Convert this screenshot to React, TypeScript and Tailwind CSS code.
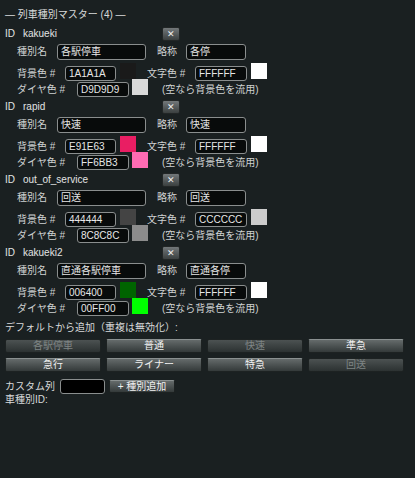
import React from "react";

type TrainType = {
  id: string;
  name: string;
  short: string;
  bg: string;
  fg: string;
  diya: string;
};

const types: TrainType[] = [
  { id: "kakueki", name: "各駅停車", short: "各停", bg: "1A1A1A", fg: "FFFFFF", diya: "D9D9D9" },
  { id: "rapid", name: "快速", short: "快速", bg: "E91E63", fg: "FFFFFF", diya: "FF6BB3" },
  { id: "out_of_service", name: "回送", short: "回送", bg: "444444", fg: "CCCCCC", diya: "8C8C8C" },
  { id: "kakueki2", name: "直通各駅停車", short: "直通各停", bg: "006400", fg: "FFFFFF", diya: "00FF00" },
];

const defaults = [
  { label: "各駅停車", disabled: true },
  { label: "普通", disabled: false },
  { label: "快速", disabled: true },
  { label: "準急", disabled: false },
  { label: "急行", disabled: false },
  { label: "ライナー", disabled: false },
  { label: "特急", disabled: false },
  { label: "回送", disabled: true },
];

function Field({ value, w, h = "h-[15px]" }: { value: string; w: string; h?: string }) {
  return (
    <div
      className={`${w} ${h} flex items-center rounded-[3px] border border-[#8a8e8e] bg-[#080b0b] px-[3px] text-[10px] leading-none text-[#e6e6e6]`}
    >
      {value}
    </div>
  );
}

function Swatch({ hex }: { hex: string }) {
  return <div className="h-[16px] w-[16px] shrink-0" style={{ backgroundColor: `#${hex}` }} />;
}

function TypeBlock({ t }: { t: TrainType }) {
  return (
    <div className="flex flex-col">
      {/* id + delete */}
      <div className="flex h-[18px] items-center">
        <span className="w-[18px]">ID</span>
        <span className="w-[139px]">{t.id}</span>
        <button className="flex h-[14px] w-[18px] items-center justify-center rounded-[2px] border border-[#222626] bg-gradient-to-b from-[#73787a] to-[#3b4040] text-[9px] leading-none text-[#f0f0f0]">
          ✕
        </button>
      </div>

      {/* name / short name */}
      <div className="mt-[1px] flex h-[16px] items-center pl-[12px]">
        <span className="w-[40px] text-[#cfd2d2]">種別名</span>
        <Field value={t.name} w="w-[89px]" h="h-[16px]" />
        <span className="ml-[11px] w-[29px] text-[#cfd2d2]">略称</span>
        <Field value={t.short} w="w-[60px]" h="h-[16px]" />
      </div>

      {/* background / text colour */}
      <div className="mt-[3px] flex h-[16px] items-start pl-[12px]">
        <span className="mt-[3px] flex h-[15px] w-[48px] items-center text-[#cfd2d2]">背景色 #</span>
        <div className="mt-[3px]">
          <Field value={t.bg} w="w-[51px]" />
        </div>
        <div className="ml-[4px]">
          <Swatch hex={t.bg} />
        </div>
        <span className="ml-[11px] mt-[3px] flex h-[15px] w-[48px] items-center text-[#cfd2d2]">文字色 #</span>
        <div className="mt-[3px]">
          <Field value={t.fg} w="w-[52px]" />
        </div>
        <div className="ml-[4px]">
          <Swatch hex={t.fg} />
        </div>
      </div>

      {/* diagram colour */}
      <div className="flex h-[16px] items-start pl-[12px]">
        <span className="mt-[3px] flex h-[15px] w-[60px] items-center text-[#cfd2d2]">ダイヤ色 #</span>
        <div className="mt-[3px]">
          <Field value={t.diya} w="w-[52px]" />
        </div>
        <div className="ml-[3px]">
          <Swatch hex={t.diya} />
        </div>
        <span className="ml-[14px] mt-[3px] flex h-[15px] items-center text-[#cfd2d2]">(空なら背景色を流用)</span>
      </div>
    </div>
  );
}

export default function App() {
  return (
    <div
      className="h-[478px] w-full bg-[#1a2021] pl-[5px] pt-[8px] text-[10px] leading-none text-[#e2e4e4]"
      style={{ fontFamily: '"Liberation Sans", "Noto Sans CJK JP", sans-serif' }}
    >
      <div className="flex h-[14px] items-center text-[#d8dada]">— 列車種別マスター (4) —</div>

      <div className="mt-[3px] flex flex-col gap-[3px]">
        {types.map((t) => (
          <TypeBlock key={t.id} t={t} />
        ))}
      </div>

      <div className="mt-[7px] flex h-[14px] items-center text-[#d8dada]">
        デフォルトから追加（重複は無効化）:
      </div>

      <div className="mt-[4px] grid w-[399px] grid-cols-4 gap-x-[5px] gap-y-[5px]">
        {defaults.map((d) =>
          d.disabled ? (
            <button
              key={d.label}
              className="flex h-[14px] items-center justify-center rounded-[2px] border border-[#1d2222] bg-gradient-to-b from-[#4c5252] to-[#2c3232] text-[10px] leading-none text-[#7f8585]"
            >
              {d.label}
            </button>
          ) : (
            <button
              key={d.label}
              className="flex h-[14px] items-center justify-center rounded-[2px] border border-[#1d2222] border-t-[#8a9090] bg-gradient-to-b from-[#656b6b] to-[#343a3a] text-[10px] leading-none text-[#f2f2f2]"
            >
              {d.label}
            </button>
          )
        )}
      </div>

      <div className="mt-[7px] flex items-start">
        <div className="flex w-[55px] flex-col gap-[3px] pt-[3px] text-[#d8dada]">
          <span>カスタム列</span>
          <span>車種別ID:</span>
        </div>
        <div className="h-[15px] w-[45px] rounded-[3px] border border-[#8a8e8e] bg-[#000000]" />
        <button className="ml-[4px] mt-[1px] flex h-[13px] w-[66px] items-center justify-center rounded-[2px] border border-[#1d2222] border-t-[#8a9090] bg-gradient-to-b from-[#656b6b] to-[#343a3a] text-[10px] leading-none text-[#f2f2f2]">
          + 種別追加
        </button>
      </div>
    </div>
  );
}
